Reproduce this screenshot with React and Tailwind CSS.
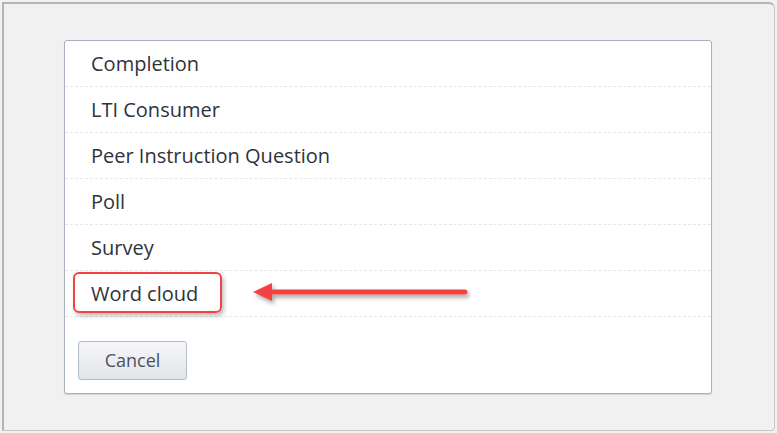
const items = ['Completion', 'LTI Consumer', 'Peer Instruction Question', 'Poll', 'Survey', 'Word cloud'];

const App = () => {
    return (
        <div className="w-[777px] h-[433px] bg-[#f1f1f1] p-[2px]" style={{ fontFamily: '"Open Sans", sans-serif' }}>
            <div className="h-full w-full border-t-2 border-l-2 border-r border-b border-t-[#b4b4b4] border-l-[#b4b4b4] border-r-[#c8c8c8] border-b-[#c8c8c8] rounded-tr-[6px] rounded-br-[4px] pt-[36px] pl-[60px] pr-[62px]">
                <div className="relative bg-white border border-[#a9b0bd] rounded-[3px] shadow-[0_1px_1px_rgba(0,0,0,0.12)]">
                    <ul>
                        {items.map((name) => (
                            <li
                                key={name}
                                className="h-[46px] flex items-center pl-[26px] border-b border-dashed border-[#e6e7e9] text-[20px] text-[#30333a]"
                            >
                                {name}
                            </li>
                        ))}
                    </ul>
                    <div className="pt-[24px] pb-[13px] pl-[13px]">
                        <button className="w-[109px] h-[39px] rounded-[3px] border border-[#b5bcc7] bg-gradient-to-b from-[#f5f6f8] to-[#e1e5eb] text-[18px] text-[#4a5261]">
                            Cancel
                        </button>
                    </div>

                    {/* highlight around Word cloud */}
                    <div className="absolute left-[8px] top-[231px] w-[149px] h-[41px] border-2 border-[#f24343] rounded-[6px] shadow-[2px_3px_4px_rgba(0,0,0,0.25)]"></div>

                    {/* arrow */}
                    <svg className="absolute left-[186px] top-[238px]" width="220" height="30" viewBox="0 0 220 30">
                        <defs>
                            <filter id="sh" x="-10%" y="-50%" width="120%" height="200%">
                                <feDropShadow dx="2" dy="3" stdDeviation="2" floodColor="#000" floodOpacity="0.35" />
                            </filter>
                        </defs>
                        <g filter="url(#sh)">
                            <line x1="16" y1="13" x2="214" y2="13" stroke="#f24343" strokeWidth="5" strokeLinecap="round" />
                            <polygon points="2,13 21,4 21,22" fill="#f24343" />
                        </g>
                    </svg>
                </div>
            </div>
        </div>
    );
};

export default App;
